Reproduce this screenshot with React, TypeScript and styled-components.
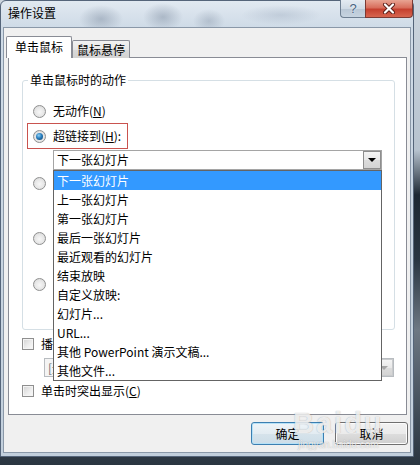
import React from "react";
import styled, { createGlobalStyle } from "styled-components";

const FONT = `"Noto Sans CJK SC", "Microsoft YaHei", "Liberation Sans", sans-serif`;

const GlobalStyle = createGlobalStyle`
  html, body { margin: 0; padding: 0; }
  body {
    width: 420px;
    height: 465px;
    overflow: hidden;
    background: linear-gradient(180deg, #ccd5de 0, #b7c3cf 150px, #1d2833 195px, #2a3642 260px, #6e7883 330px, #3d4955 420px, #2a3540 465px);
    font-family: ${FONT};
    font-size: 12px;
    color: #000;
  }
`;

const Window = styled.div`
  position: relative;
  width: 414px;
  height: 457px;
  box-sizing: border-box;
  border: 1px solid #55657a;
  border-radius: 6px 6px 0 0;
  display: flex;
  flex-direction: column;
  background:
    radial-gradient(ellipse 22px 14px at 100px 18px, rgba(120, 135, 155, 0.45), transparent),
    radial-gradient(ellipse 20px 14px at 162px 16px, rgba(120, 135, 155, 0.45), transparent),
    radial-gradient(ellipse 16px 12px at 208px 20px, rgba(120, 135, 155, 0.35), transparent),
    radial-gradient(ellipse 40px 10px at 280px 14px, rgba(150, 165, 185, 0.35), transparent),
    linear-gradient(180deg, #e1e9f1 0, #cfdbe7 26px, #c2cfdc 100%);
`;

const TitleBar = styled.div`
  height: 26px;
  display: flex;
  align-items: flex-start;
  padding-left: 7px;
`;

const Title = styled.span`
  margin-top: 4px;
  line-height: 16px;
  font-size: 12px;
  color: #000;
`;

const CaptionButtons = styled.div`
  margin-left: auto;
  margin-top: -1px;
  display: flex;
  height: 18px;
`;

const HelpButton = styled.div`
  width: 25px;
  box-sizing: border-box;
  border: 1px solid #6e7f92;
  border-right: none;
  border-top: none;
  border-radius: 0 0 0 4px;
  background: linear-gradient(180deg, #e4ebf2 0, #d0dbe6 50%, #b9c7d5 51%, #c6d3e0 100%);
  display: flex;
  align-items: center;
  justify-content: center;
  font-family: "Liberation Sans", sans-serif;
  font-size: 13px;
  color: #4a6582;
  text-shadow: 0 0 2px #fff;
`;

const CloseButton = styled.div`
  width: 48px;
  box-sizing: border-box;
  border: 1px solid #7c3a33;
  border-top: none;
  border-radius: 0 0 4px 0;
  background: linear-gradient(180deg, #e8a493 0, #d86e5c 45%, #c5402f 55%, #d7654f 100%);
  display: flex;
  align-items: center;
  justify-content: center;
`;

const Client = styled.div`
  flex: 1;
  margin: 0 2px 3px 2px;
  border: 1px solid #8a98a8;
  background: #f0f0f0;
  padding: 8px 3px 0 4px;
  display: flex;
  flex-direction: column;
`;

const TabRow = styled.div`
  position: relative;
  z-index: 1;
  display: flex;
  align-items: flex-end;
  height: 22px;
  margin-left: -2px;
  margin-bottom: -1px;
`;

const Tab = styled.div<{ $active?: boolean }>`
  box-sizing: border-box;
  border: 1px solid #898c95;
  border-bottom: none;
  border-radius: 2px 2px 0 0;
  text-align: center;
  width: ${(p) => (p.$active ? 66 : 58)}px;
  height: ${(p) => (p.$active ? 22 : 18)}px;
  line-height: ${(p) => (p.$active ? 20 : 17)}px;
  background: ${(p) =>
    p.$active ? "#fff" : "linear-gradient(180deg, #f2f2f2 0, #e6e6e6 50%, #d9d9d9 51%, #d2d2d2 100%)"};
`;

const Panel = styled.div`
  height: 358px;
  box-sizing: border-box;
  border: 1px solid #898c95;
  background: #fff;
  padding: 14px 11px 0 13px;
  display: flex;
  flex-direction: column;
`;

const GroupBox = styled.fieldset`
  margin: 0;
  padding: 0;
  min-width: 0;
  height: 258px;
  box-sizing: border-box;
  border: 1px solid #d5dfe5;
  border-radius: 3px;
`;

const Legend = styled.legend`
  margin-left: 5px;
  padding: 0 2px;
  line-height: 16px;
`;

const GroupBody = styled.div`
  display: flex;
  flex-direction: column;
`;

const RadioRow = styled.div<{ $top: number }>`
  display: flex;
  align-items: center;
  gap: 7px;
  height: 20px;
  margin-top: ${(p) => p.$top}px;
  margin-left: 10px;
  line-height: 16px;
`;

const MarkedRow = styled.div`
  display: flex;
  align-items: center;
  gap: 7px;
  width: 101px;
  height: 26px;
  box-sizing: border-box;
  margin: 2px 0 0 4px;
  padding-left: 5px;
  border: 1px solid #c9534f;
  line-height: 16px;
`;

const Radio = styled.span<{ $checked?: boolean }>`
  position: relative;
  flex: none;
  width: 13px;
  height: 13px;
  box-sizing: border-box;
  border-radius: 50%;
  border: 1px solid #8f9090;
  background: radial-gradient(circle at 50% 55%, #f7f7f7 0, #e6e6e6 55%, #d0d0d0 100%);

  &::after {
    content: "";
    display: ${(p) => (p.$checked ? "block" : "none")};
    position: absolute;
    left: 2px;
    top: 2px;
    width: 7px;
    height: 7px;
    border-radius: 50%;
    background: radial-gradient(circle at 40% 35%, #8fd0f5 0, #2a7fbf 45%, #0c3a63 100%);
  }
`;

const ComboWrap = styled.div<{ $left: number; $width: number; $top: number; $layer: number }>`
  position: relative;
  z-index: ${(p) => p.$layer};
  margin-top: ${(p) => p.$top}px;
  margin-left: ${(p) => p.$left}px;
  width: ${(p) => p.$width}px;
  flex: none;
`;

const ComboBox = styled.div<{ $disabled?: boolean; $height: number }>`
  height: ${(p) => p.$height}px;
  box-sizing: border-box;
  border: 1px solid ${(p) => (p.$disabled ? "#b8bcc0" : "#a5a5a5")};
  background: ${(p) => (p.$disabled ? "#f4f4f4" : "#fff")};
  color: ${(p) => (p.$disabled ? "#6d6d6d" : "#000")};
  display: flex;
  align-items: center;
  padding-left: 3px;
  line-height: 16px;
`;

const ComboButton = styled.span<{ $disabled?: boolean }>`
  margin-left: auto;
  align-self: stretch;
  width: 18px;
  box-sizing: border-box;
  border: 1px solid ${(p) => (p.$disabled ? "#c9cbcd" : "#8e8e8e")};
  background: linear-gradient(180deg, #f4f4f4 0, #e9e9e9 50%, #dcdcdc 51%, #d4d4d4 100%);
  display: flex;
  align-items: center;
  justify-content: center;

  &::after {
    content: "";
    border-left: 4px solid transparent;
    border-right: 4px solid transparent;
    border-top: 4px solid ${(p) => (p.$disabled ? "#a6a6a6" : "#000")};
  }
`;

const DropList = styled.ul`
  position: absolute;
  top: 100%;
  left: 0;
  width: 100%;
  box-sizing: border-box;
  margin: 0;
  padding: 0;
  list-style: none;
  border: 1px solid #646464;
  background: #fff;
`;

const DropItem = styled.li<{ $selected?: boolean }>`
  height: 19px;
  line-height: 19px;
  padding-left: 3px;
  background: ${(p) => (p.$selected ? "#3399ff" : "transparent")};
  color: ${(p) => (p.$selected ? "#fff" : "#000")};
  white-space: nowrap;
`;

const CheckRow = styled.div<{ $top: number }>`
  display: flex;
  align-items: center;
  gap: 7px;
  height: 16px;
  margin-top: ${(p) => p.$top}px;
  line-height: 16px;
`;

const CheckBox = styled.span`
  flex: none;
  width: 12px;
  height: 12px;
  box-sizing: border-box;
  border: 1px solid #8f8f8f;
  background: linear-gradient(135deg, #d2d2d2 0, #eeeeee 60%, #fafafa 100%);
  box-shadow: inset 0 0 0 1px #f4f4f4;
`;

const ButtonRow = styled.div`
  display: flex;
  justify-content: flex-end;
  gap: 11px;
  margin-top: 7px;
  margin-right: -1px;
`;

const DialogButton = styled.button<{ $default?: boolean }>`
  width: 73px;
  height: 23px;
  padding: 0;
  border-radius: 3px;
  font-family: ${FONT};
  font-size: 12px;
  color: #000;
  border: 1px solid ${(p) => (p.$default ? "#3c7fb1" : "#707070")};
  background: ${(p) =>
    p.$default
      ? "linear-gradient(180deg, #eef4f8 0, #e3ecf2 50%, #d6e3eb 51%, #cddde8 100%)"
      : "linear-gradient(180deg, #f2f2f2 0, #ebebeb 50%, #dddddd 51%, #cfcfcf 100%)"};
  box-shadow: inset 0 0 0 1px ${(p) => (p.$default ? "#b5e1f7" : "#fcfcfc")};
`;

const Watermark = styled.div`
  position: absolute;
  left: 292px;
  top: 406px;
  display: flex;
  flex-direction: column;
  align-items: center;
  pointer-events: none;
  color: rgba(255, 255, 255, 0.78);
  text-shadow: 0 0 1px rgba(90, 90, 90, 0.5);
  font-family: "Liberation Sans", sans-serif;
`;

const MarkBig = styled.span`
  font-size: 29px;
  font-weight: bold;
  letter-spacing: 2px;
  line-height: 32px;
`;

const MarkSmall = styled.span`
  font-size: 10px;
  line-height: 12px;
`;

const items = [
  "下一张幻灯片",
  "上一张幻灯片",
  "第一张幻灯片",
  "最后一张幻灯片",
  "最近观看的幻灯片",
  "结束放映",
  "自定义放映:",
  "幻灯片...",
  "URL...",
  "其他 PowerPoint 演示文稿...",
  "其他文件...",
];

const CloseGlyph = () => (
  <svg width="14" height="11" viewBox="0 0 14 11">
    <path d="M3 1.5 L11 9.5 M11 1.5 L3 9.5" stroke="#5a1e18" strokeWidth="4" strokeLinecap="round" />
    <path d="M3 1.5 L11 9.5 M11 1.5 L3 9.5" stroke="#fff" strokeWidth="2.2" strokeLinecap="round" />
  </svg>
);

export default function App() {
  return (
    <>
      <GlobalStyle />
      <Window>
        <TitleBar>
          <Title>操作设置</Title>
          <CaptionButtons>
            <HelpButton>?</HelpButton>
            <CloseButton>
              <CloseGlyph />
            </CloseButton>
          </CaptionButtons>
        </TitleBar>

        <Client>
          <TabRow>
            <Tab $active>单击鼠标</Tab>
            <Tab>鼠标悬停</Tab>
          </TabRow>

          <Panel>
            <GroupBox>
              <Legend>单击鼠标时的动作</Legend>
              <GroupBody>
                <RadioRow $top={13}>
                  <Radio />
                  <span>
                    无动作(<u>N</u>)
                  </span>
                </RadioRow>
                <MarkedRow>
                  <Radio $checked />
                  <span>
                    超链接到(<u>H</u>):
                  </span>
                </MarkedRow>
                <ComboWrap $top={1} $left={30} $width={329} $layer={5}>
                  <ComboBox $height={20}>
                    下一张幻灯片
                    <ComboButton />
                  </ComboBox>
                  <DropList>
                    {items.map((text, i) => (
                      <DropItem key={text} $selected={i === 0}>
                        {text}
                      </DropItem>
                    ))}
                  </DropList>
                </ComboWrap>
                {/* the other actions sit under the open list; only their radios show */}
                <RadioRow $top={3}>
                  <Radio />
                </RadioRow>
                <RadioRow $top={35}>
                  <Radio />
                </RadioRow>
                <RadioRow $top={26}>
                  <Radio />
                </RadioRow>
              </GroupBody>
            </GroupBox>

            <CheckRow $top={6}>
              <CheckBox />
              <span>播放声音(P):</span>
            </CheckRow>
            <ComboWrap $top={6} $left={22} $width={350} $layer={0}>
              <ComboBox $disabled $height={19}>
                [无声音]
                <ComboButton $disabled />
              </ComboBox>
            </ComboWrap>
            <CheckRow $top={6}>
              <CheckBox />
              <span>
                单击时突出显示(<u>C</u>)
              </span>
            </CheckRow>
          </Panel>

          <ButtonRow>
            <DialogButton $default>确定</DialogButton>
            <DialogButton>取消</DialogButton>
          </ButtonRow>
        </Client>

        <Watermark>
          <MarkBig>Baidu</MarkBig>
          <MarkSmall>jingyan.baidu.com</MarkSmall>
        </Watermark>
      </Window>
    </>
  );
}
